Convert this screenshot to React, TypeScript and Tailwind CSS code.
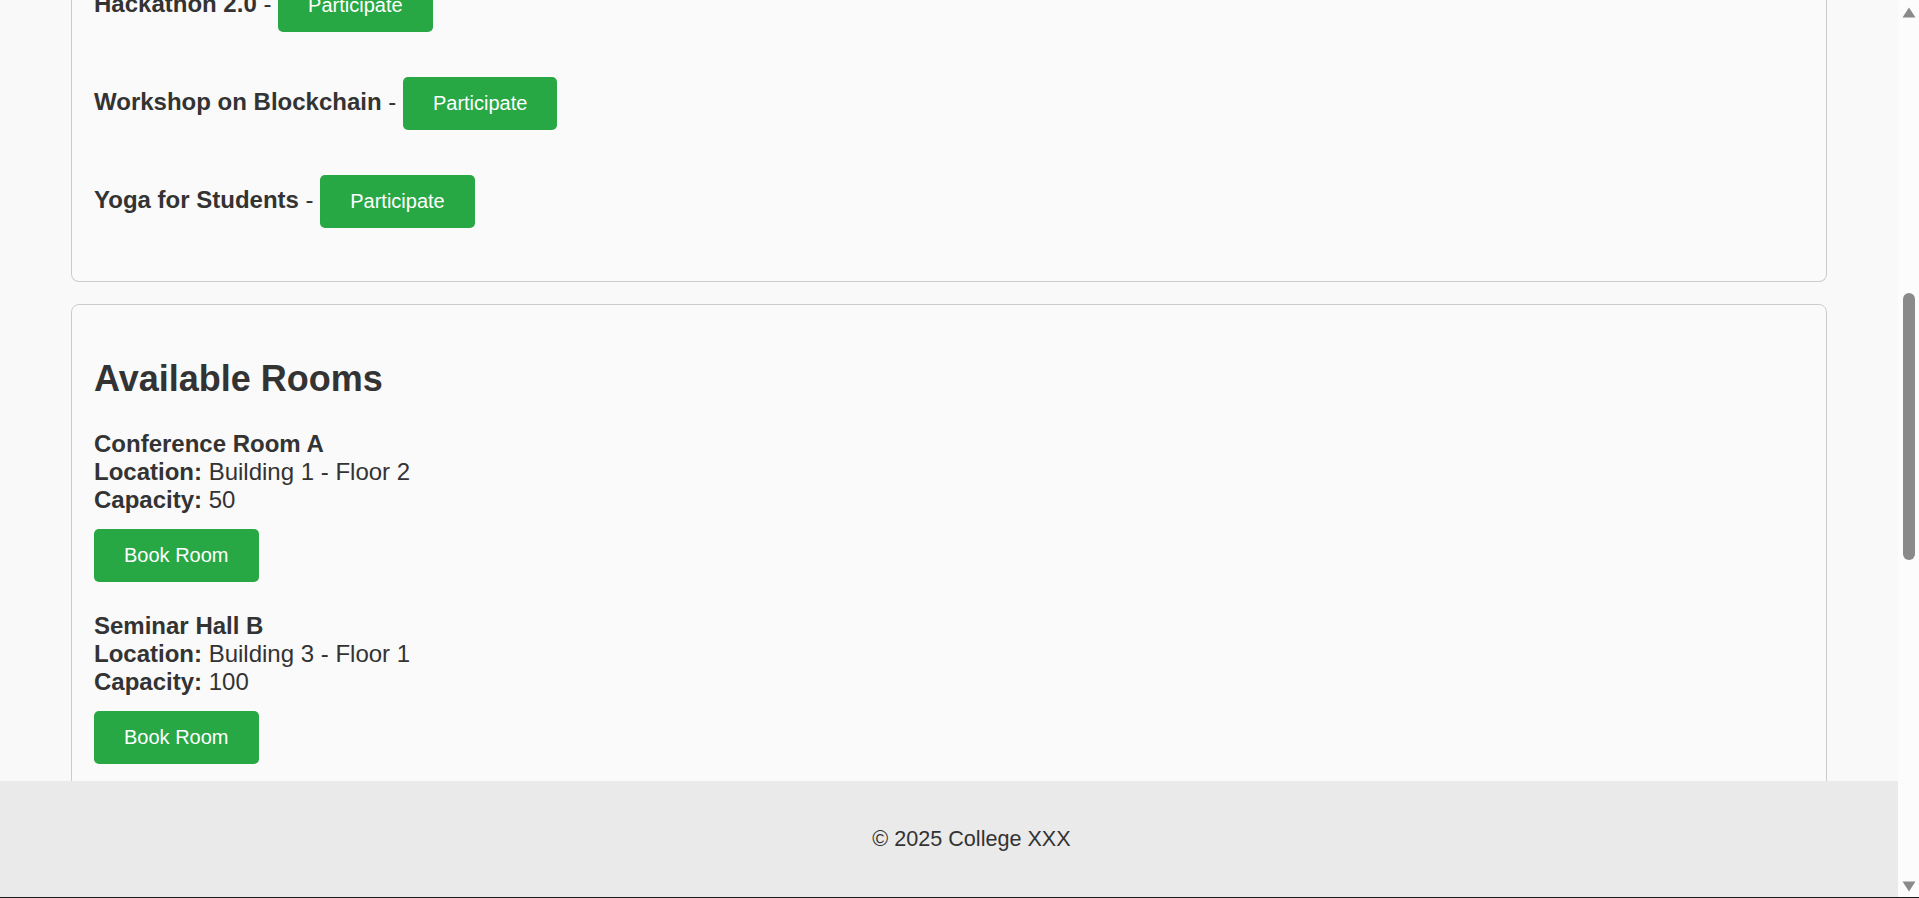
import React from "react";

const events = ["Hackathon 2.0", "Workshop on Blockchain", "Yoga for Students"];

const rooms = [
	{ name: "Conference Room A", location: "Building 1 - Floor 2", capacity: 50 },
	{ name: "Seminar Hall B", location: "Building 3 - Floor 1", capacity: 100 },
];

function GreenButton({ label, className = "" }: { label: string; className?: string }) {
	return (
		<button className={`inline-block rounded-[5px] bg-[#28a745] px-[30px] py-[15px] text-[20px] leading-[23px] text-white ${className}`}>
			{label}
		</button>
	);
}

function Scrollbar() {
	return (
		<div className="flex w-[21px] flex-col items-center bg-[#fcfcfc] pt-[7px] pb-[5px]">
			<svg width="14" height="11" viewBox="0 0 14 11">
				<path d="M7 0.5 L13.5 10.5 L0.5 10.5 Z" fill="#8a8a8a" />
			</svg>
			<div className="mt-[275px] h-[267px] w-[12px] rounded-full bg-[#8a8a8a]" />
			<div className="flex-1" />
			<svg width="14" height="11" viewBox="0 0 14 11">
				<path d="M0.5 0.5 L13.5 0.5 L7 10.5 Z" fill="#8a8a8a" />
			</svg>
		</div>
	);
}

export default function App() {
	return (
		<div className="flex h-[898px] w-full flex-col overflow-hidden bg-[#f9f9f9] font-['Liberation_Sans',Arial,sans-serif] text-[#333]">
			<div className="flex min-h-0 flex-1">
				<div className="flex min-w-0 flex-1 flex-col">
					<main className="min-h-0 flex-1 overflow-hidden px-[71px] text-[24px] leading-[28px]">
						{/* events card, scrolled partly out of view */}
						<section className="rounded-b-[8px] border border-t-0 border-[#ccc] bg-[#fafafa] px-[22px] pb-[53px]">
							<ul className="-mt-[21px] flex flex-col gap-[45px]">
								{events.map((ev) => (
									<li key={ev}>
										<strong className="font-bold">{ev}</strong> - <GreenButton label="Participate" />
									</li>
								))}
							</ul>
						</section>

						<section className="mt-[22px] rounded-[8px] border border-[#ccc] bg-[#fafafa] px-[22px] pt-[22px] pb-[40px]">
							<h2 className="mt-[31px] mb-[31px] text-[36px] leading-[41px] font-bold">Available Rooms</h2>
							<div className="flex flex-col gap-[30px]">
								{rooms.map((room) => (
									<div key={room.name} className="flex flex-col items-start">
										<p className="font-bold">{room.name}</p>
										<p>
											<strong className="font-bold">Location:</strong> {room.location}
										</p>
										<p>
											<strong className="font-bold">Capacity:</strong> {room.capacity}
										</p>
										<GreenButton label="Book Room" className="mt-[15px]" />
									</div>
								))}
							</div>
						</section>
					</main>
					<footer className="flex h-[116px] items-center justify-center bg-[#eaeaea] pl-[45px] text-[21.6px] text-[#333]">
						© 2025 College XXX
					</footer>
				</div>
				<Scrollbar />
			</div>
			<div className="h-px bg-[#1a1a1a]" />
		</div>
	);
}
